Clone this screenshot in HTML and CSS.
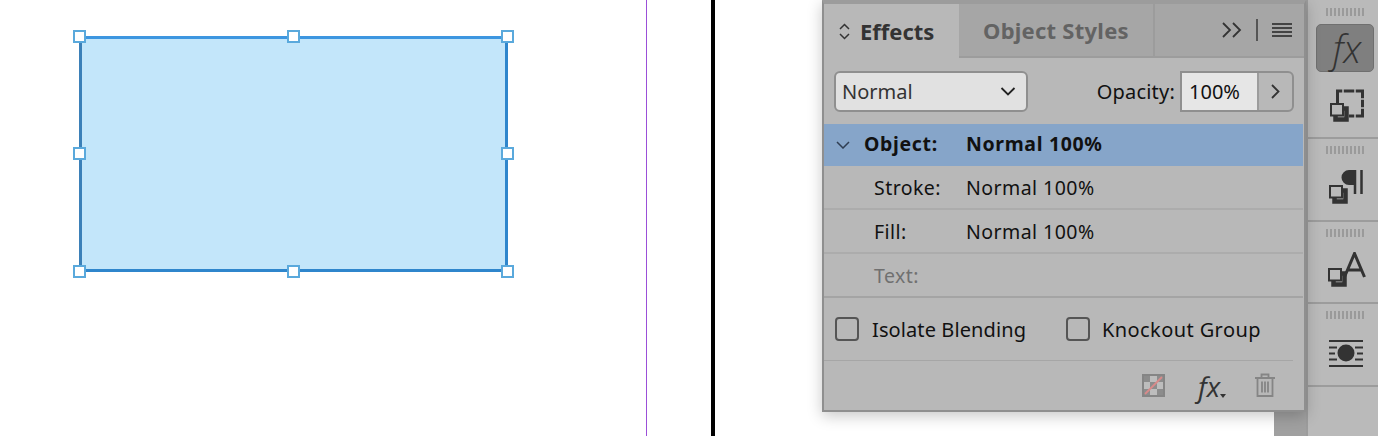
FILE: index.html
```html
<!DOCTYPE html>
<html lang="en">
<head>
  <meta charset="UTF-8">
  <title>Effects panel</title>
  <link rel="stylesheet" href="styles.css">
</head>
<body>
  <div class="workspace">
    <div class="canvas">
      <div class="shape">
        <span class="handle h-tl"></span><span class="handle h-tc"></span><span class="handle h-tr"></span>
        <span class="handle h-ml"></span><span class="handle h-mr"></span>
        <span class="handle h-bl"></span><span class="handle h-bc"></span><span class="handle h-br"></span>
      </div>
      <div class="guide"></div>
      <div class="spine"></div>
    </div>

    <div class="dock">
      <div class="dock-gutter"></div>
      <div class="dock-col">
        <div class="dock-group dock-first">
          <div class="gripper"></div>
          <div class="dock-btn active"><span class="fx">fx</span></div>
          <svg class="dock-icon" width="40" height="36" viewBox="0 0 40 36">
            <path d="M12.500 16V3h25v25H24" fill="none" stroke="#333" stroke-width="3"/>
            <path d="M18 1v4M30 1v4M35 11h4M35 20h4M30 26v4" stroke="#bababa" stroke-width="1.500"/>
            <rect x="10.500" y="20.500" width="11" height="11" fill="#bababa" stroke="#333" stroke-width="4.500"/>
            <rect x="6" y="16" width="12" height="11.500" fill="#bababa" stroke="#333" stroke-width="2"/>
          </svg>
        </div>
        <div class="dock-group">
          <div class="gripper"></div>
          <svg class="dock-icon" width="40" height="36" viewBox="0 0 40 36">
            <path d="M30 1v24M36.500 1v24" stroke="#333" stroke-width="2.500" fill="none"/>
            <path d="M37 1H24a7.500 7.500 0 0 0 0 15h6V1z" fill="#333"/>
            <rect x="9.500" y="21.500" width="11" height="11" fill="#bababa" stroke="#333" stroke-width="4.500"/>
            <rect x="5" y="17" width="12" height="11.500" fill="#bababa" stroke="#333" stroke-width="2"/>
          </svg>
        </div>
        <div class="dock-group">
          <div class="gripper"></div>
          <svg class="dock-icon" width="42" height="36" viewBox="0 0 42 36">
            <path d="M20.500 25L30.500 1.500L40.500 25M23.500 18h14" fill="none" stroke="#333" stroke-width="3"/>
            <rect x="9.500" y="21.500" width="11" height="11" fill="#bababa" stroke="#333" stroke-width="4.500"/>
            <rect x="5" y="17" width="12" height="11.500" fill="#bababa" stroke="#333" stroke-width="2"/>
          </svg>
        </div>
        <div class="dock-group">
          <div class="gripper"></div>
          <svg class="dock-icon wrap-icon" width="36" height="28" viewBox="0 0 36 28">
            <path d="M1 2h34M1 8.500h8M27 8.500h8M1 14.500h6M29 14.500h6M1 20.500h8M27 20.500h8M1 27h34" stroke="#333" stroke-width="2" fill="none"/>
            <circle cx="18" cy="14" r="8.500" fill="#333"/>
          </svg>
        </div>
        <div class="dock-group"></div>
      </div>
    </div>

    <div class="panel">
      <div class="tabs">
        <div class="tab active">
          <svg width="11" height="17" viewBox="0 0 11 17"><path d="M1 6l4.500-4.500L10 6M1 11l4.500 4.500L10 11" fill="none" stroke="#333" stroke-width="1.500"/></svg>
          <span>Effects</span>
        </div>
        <div class="tab">Object Styles</div>
        <div class="tab-tools">
          <svg width="20" height="16" viewBox="0 0 20 16"><path d="M1 1l7 7-7 7M11 1l7 7-7 7" fill="none" stroke="#333" stroke-width="1.800"/></svg>
          <span class="tool-sep"></span>
          <span class="menu-lines"></span>
        </div>
      </div>

      <div class="controls">
        <div class="select">
          <span>Normal</span>
          <svg width="16" height="9" viewBox="0 0 16 9"><path d="M1.500 1l6.500 6.500L14.500 1" fill="none" stroke="#222" stroke-width="1.800"/></svg>
        </div>
        <span class="label">Opacity:</span>
        <div class="stepper">
          <span class="stepper-value">100%</span>
          <span class="stepper-btn"><svg width="9" height="15" viewBox="0 0 9 15"><path d="M1 1l6.500 6.500L1 14" fill="none" stroke="#333" stroke-width="1.800"/></svg></span>
        </div>
      </div>

      <div class="rows">
        <div class="row selected">
          <svg class="twist" width="14" height="8" viewBox="0 0 14 8"><path d="M1 1l6 6 6-6" fill="none" stroke="#2f3e52" stroke-width="1.500"/></svg>
          <span class="row-name">Object:</span><span>Normal 100%</span>
        </div>
        <div class="row"><span class="row-name">Stroke:</span><span>Normal 100%</span></div>
        <div class="row"><span class="row-name">Fill:</span><span>Normal 100%</span></div>
        <div class="row muted"><span class="row-name">Text:</span></div>
      </div>

      <div class="checks">
        <label class="check"><span class="box"></span>Isolate Blending</label>
        <label class="check"><span class="box"></span>Knockout Group</label>
      </div>

      <div class="footer">
        <svg class="foot-clear" width="23" height="23" viewBox="0 0 23 23">
          <rect x="1" y="1" width="21" height="21" fill="#bdbdbd"/>
          <path d="M1 1h7v7H1zM15 1h7v7h-7zM8 8h7v7H8zM1 15h7v7H1zM15 15h7v7h-7z" fill="#8c8c8c"/>
          <rect x="1" y="1" width="21" height="21" fill="none" stroke="#858585" stroke-width="2"/>
          <path d="M3 20L20 3" stroke="#d98a8a" stroke-width="1.800"/>
        </svg>
        <span class="foot-fx"><span class="fx small">fx</span><i class="caret"></i></span>
        <svg class="foot-trash" width="22" height="25" viewBox="0 0 22 25">
          <path d="M1 5h20M7.500 5V1.500h7V5M3.500 5v18h15V5M8 8.500v11M11 8.500v11M14 8.500v11" fill="none" stroke="#858585" stroke-width="1.800"/>
        </svg>
      </div>
    </div>
  </div>
</body>
</html>
```

FILE: styles.css
```css
* {
  margin: 0;
  padding: 0;
  box-sizing: border-box;
}
html, body {
  height: 100%;
  overflow: hidden;
}
body {
  font-family: "Noto Sans", Arial, sans-serif;
  background-color: #fff;
  color: #111;
}
.workspace {
  position: relative;
  display: flex;
  height: 436px;
}

/* page area */
.canvas {
  position: relative;
  flex: 1;
  background-color: #fff;
}
.shape {
  position: absolute;
  left: 79px;
  top: 36px;
  width: 429px;
  height: 236px;
  background-color: #c3e6fa;
  border: 3px solid #3d96e0;
  border-left-color: #3b80b8;
  border-right-color: #2f86cc;
  border-bottom-color: #2f86cc;
}
.handle {
  position: absolute;
  width: 13px;
  height: 13px;
  background-color: #fff;
  border: 2px solid #5aa9dc;
}
.h-tl { left: -9px; top: -9px; }
.h-tc { left: 205px; top: -9px; }
.h-tr { right: -9px; top: -9px; }
.h-ml { left: -9px; top: 108px; }
.h-mr { right: -9px; top: 108px; }
.h-bl { left: -9px; bottom: -9px; }
.h-bc { left: 205px; bottom: -9px; }
.h-br { right: -9px; bottom: -9px; }
.guide {
  position: absolute;
  left: 646px;
  top: 0;
  bottom: 0;
  width: 1px;
  background-color: #9b4fd8;
}
.spine {
  position: absolute;
  left: 711px;
  top: 0;
  bottom: 0;
  width: 4px;
  background-color: #000;
}

/* dock on the right */
.dock {
  display: flex;
  width: 104px;
}
.dock-gutter {
  width: 32px;
  background-color: #a0a0a0;
}
.dock-col {
  flex: 1;
  background-color: #bababa;
  border-left: 2px solid #9c9c9c;
}
.dock-group {
  display: flex;
  flex-direction: column;
  align-items: center;
  height: 82.500px;
  padding: 7px 0 0 4px;
  border-bottom: 2px solid #9c9c9c;
}
.dock-first {
  height: 139px;
  padding-top: 8px;
}
.dock-group:last-child {
  border-bottom: none;
  height: auto;
}
.gripper {
  width: 39px;
  height: 8px;
  background: repeating-linear-gradient(90deg, #9a9a9a 0, #9a9a9a 2px, transparent 2px, transparent 4px);
}
.dock-btn {
  display: flex;
  align-items: center;
  justify-content: center;
  width: 58px;
  height: 48px;
  margin-top: 8px;
  padding-left: 4px;
  background-color: #7f7f7f;
  border: 1px solid #6f6f6f;
  border-radius: 5px;
}
.fx {
  font-family: "Open Sans", Arial, sans-serif;
  font-style: italic;
  font-weight: 300;
  font-size: 38px;
  line-height: 1;
  color: #333;
}
.dock-icon {
  margin-top: 15px;
}
.dock-first .dock-icon {
  margin-top: 16px;
}
.wrap-icon {
  margin-top: 20px;
  margin-left: 2px;
}

/* effects panel, floats over the canvas */
.panel {
  position: absolute;
  top: 0;
  right: 72px;
  width: 484px;
  height: 412px;
  display: flex;
  flex-direction: column;
  background-color: #b8b8b8;
  border: 2px solid #8f8f8f;
  border-top: 4px solid #9c9c9c;
  box-shadow: 0 4px 14px rgba(0, 0, 0, 0.22);
}
.tabs {
  display: flex;
  height: 54px;
  background-color: #a6a6a6;
  border-bottom: 2px solid #9c9c9c;
}
.tab {
  display: flex;
  align-items: center;
  gap: 10px;
  padding: 0 24px;
  font-size: 22px;
  font-weight: 700;
  letter-spacing: 0.25px;
  color: #636363;
  border-right: 2px solid #9c9c9c;
}
.tab.active {
  width: 135px;
  height: 54px;
  padding: 0 0 0 15px;
  background-color: #b8b8b8;
  color: #333;
  border-right: none;
  letter-spacing: 0;
}
.tab-tools {
  flex: 1;
  display: flex;
  align-items: center;
  justify-content: flex-end;
  padding-right: 12px;
}
.tool-sep {
  width: 2px;
  height: 22px;
  margin: 0 14px;
  background-color: #555;
}
.menu-lines {
  width: 20px;
  height: 14px;
  background: repeating-linear-gradient(180deg, #444 0, #444 2px, transparent 2px, transparent 4px);
}

.controls {
  display: flex;
  align-items: center;
  height: 66px;
  padding: 0 10px;
  font-size: 20px;
}
.select {
  display: flex;
  align-items: center;
  justify-content: space-between;
  width: 194px;
  height: 41px;
  padding: 0 10px 0 6px;
  background-color: #e1e1e1;
  border: 2px solid #8f8f8f;
  border-radius: 6px;
  color: #333;
}
.label {
  margin-left: auto;
  margin-right: 5px;
  letter-spacing: 0.2px;
}
.stepper {
  display: flex;
  width: 114px;
  height: 41px;
  border: 2px solid #8f8f8f;
  border-radius: 0 6px 6px 0;
}
.stepper-value {
  width: 75px;
  padding-left: 7px;
  line-height: 37px;
  background-color: #e6e6e6;
}
.stepper-btn {
  flex: 1;
  display: flex;
  align-items: center;
  justify-content: center;
  border-left: 2px solid #9c9c9c;
}

.rows {
  padding-right: 1px;
  font-size: 19.500px;
  letter-spacing: 0.45px;
}
.row {
  display: flex;
  align-items: center;
  height: 44px;
  padding-left: 50px;
  border-bottom: 2px solid #acacac;
}
.row-name {
  width: 92px;
}
.row.selected {
  position: relative;
  height: 42px;
  padding: 0 0 3px 40px;
  background-color: #86a5c9;
  border-bottom: none;
  font-weight: 700;
  letter-spacing: 0.65px;
}
.row.selected .row-name {
  width: 102px;
}
.twist {
  position: absolute;
  left: 12px;
  top: 17px;
}
.row.muted {
  color: #707070;
  border-bottom-color: #a4a4a4;
}

.checks {
  display: flex;
  align-items: center;
  gap: 40px;
  height: 63px;
  padding-left: 11px;
  font-size: 20px;
  letter-spacing: 0.1px;
  border-bottom: 1px solid #a6a6a6;
  margin: 0 11px 0 0;
}
.check {
  display: flex;
  align-items: center;
  gap: 12px;
}
.check:first-child {
  gap: 13px;
}
.check + .check {
  letter-spacing: 0.4px;
}
.box {
  width: 24px;
  height: 24px;
  border: 2px solid #555;
  border-radius: 4px;
}

.footer {
  flex: 1;
  display: flex;
  align-items: center;
  padding-left: 318px;
}
.foot-fx {
  display: flex;
  align-items: flex-end;
  margin-left: 33px;
  margin-right: 28px;
}
.fx.small {
  font-size: 28px;
  font-weight: 400;
}
.caret {
  width: 0;
  height: 0;
  margin-bottom: 2px;
  border: 3px solid transparent;
  border-top: 4px solid #333;
  border-bottom: none;
}
```
